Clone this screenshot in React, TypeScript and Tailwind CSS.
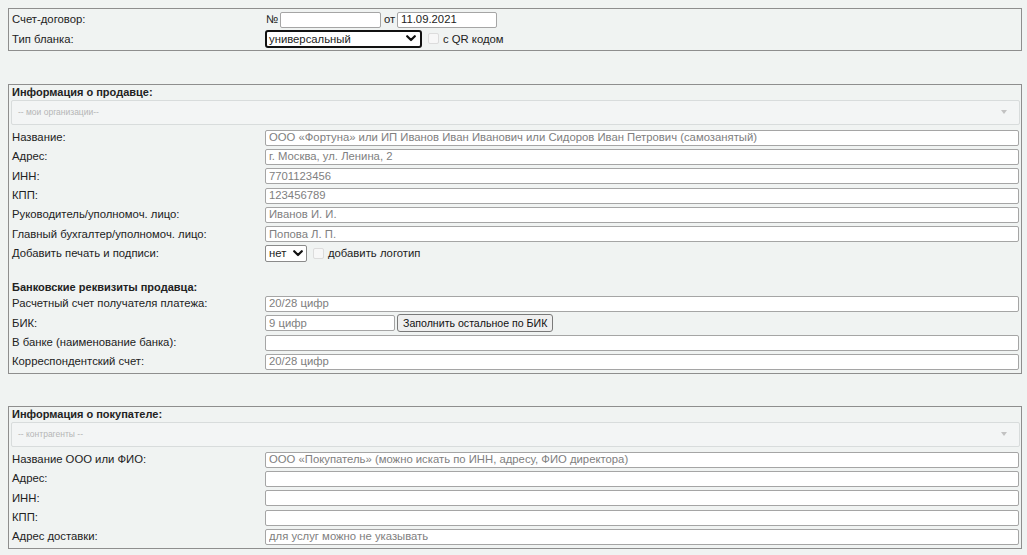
import React from 'react';

const Chevron = () => (
  <svg width="10" height="7" viewBox="0 0 10 7" className="shrink-0">
    <path d="M1.2 1.2 L5 5 L8.8 1.2" fill="none" stroke="#111" strokeWidth="2.2" strokeLinecap="round" strokeLinejoin="round" />
  </svg>
);

const TextInput = ({ placeholder, value, className = 'w-full' }: { placeholder?: string; value?: string; className?: string }) => (
  <input
    readOnly
    placeholder={placeholder}
    defaultValue={value}
    className={`h-[16px] ${className} border border-[#a5a5a5] rounded-[2px] bg-white px-[3px] text-[11.3px] text-[#222] placeholder:text-[#808080] outline-none`}
  />
);

const FakeCheckbox = () => (
  <span className="inline-block w-[11px] h-[11px] border border-[#dcdcdc] rounded-[2px] bg-[#f7f7f7]" />
);

const Row = ({ label, children }: { label: string; children: React.ReactNode }) => (
  <div className="grid grid-cols-[253px_1fr] h-[19.33px] items-center">
    <div className="whitespace-nowrap">{label}</div>
    <div className="flex items-center">{children}</div>
  </div>
);

const OrgSelect = ({ text }: { text: string }) => (
  <div className="-mx-px h-[25px] flex items-center justify-between border border-[#d8dcdc] rounded-[2px] bg-[#f3f5f5] pl-[6px] pr-[12px]">
    <span className="text-[8.5px] text-[#b5b5b5]">{text}</span>
    <svg width="6" height="4" viewBox="0 0 6 4">
      <path d="M0 0 L6 0 L3 4 Z" fill="#c2c2c2" />
    </svg>
  </div>
);

const Box = ({ children, className = '' }: { children: React.ReactNode; className?: string }) => (
  <div className={`border border-[#8e8e8e] pl-[3px] pr-[2px] ${className}`}>{children}</div>
);

export default function App() {
  return (
    <div className="min-h-[555px] bg-[#f0f3f2] pt-[8px] pl-[8px] pr-[5px] text-[11.3px] text-[#222] font-['Liberation_Sans',Arial,sans-serif]">
      <Box className="py-px">
        <Row label="Счет-договор:">
          <span className="ml-px w-[14px]">№</span>
          <TextInput className="w-[101px]" />
          <span className="ml-[3px] w-[13px]">от</span>
          <TextInput className="w-[100px]" value="11.09.2021" />
        </Row>
        <Row label="Тип бланка:">
          <div className="h-[18px] w-[157px] flex items-center justify-between border-2 border-[#111] rounded-[3px] bg-white pl-[2px] pr-[4px]">
            <span>универсальный</span>
            <Chevron />
          </div>
          <span className="ml-[6px] mr-[4px] flex items-center"><FakeCheckbox /></span>
          <span>с QR кодом</span>
        </Row>
      </Box>

      <Box className="mt-[33px] pb-px">
        <div className="h-[15px] flex items-center font-bold text-[11px]">Информация о продавце:</div>
        <OrgSelect text="-- мои организации--" />
        <div className="h-[3.3px]" />
        <Row label="Название:">
          <TextInput placeholder="ООО «Фортуна» или ИП Иванов Иван Иванович или Сидоров Иван Петрович (самозанятый)" />
        </Row>
        <Row label="Адрес:">
          <TextInput placeholder="г. Москва, ул. Ленина, 2" />
        </Row>
        <Row label="ИНН:">
          <TextInput placeholder="7701123456" />
        </Row>
        <Row label="КПП:">
          <TextInput placeholder="123456789" />
        </Row>
        <Row label="Руководитель/уполномоч. лицо:">
          <TextInput placeholder="Иванов И. И." />
        </Row>
        <Row label="Главный бухгалтер/уполномоч. лицо:">
          <TextInput placeholder="Попова Л. П." />
        </Row>
        <Row label="Добавить печать и подписи:">
          <div className="h-[17px] w-[42px] flex items-center justify-between border border-[#8a8a8a] rounded-[2px] bg-white pl-[3px] pr-[3px]">
            <span>нет</span>
            <Chevron />
          </div>
          <span className="ml-[6px] mr-[4px] flex items-center"><FakeCheckbox /></span>
          <span>добавить логотип</span>
        </Row>
        <div className="h-[16px]" />
        <div className="h-[15px] flex items-center font-bold text-[11px]">Банковские реквизиты продавца:</div>
        <Row label="Расчетный счет получателя платежа:">
          <TextInput placeholder="20/28 цифр" />
        </Row>
        <Row label="БИК:">
          <TextInput className="w-[130px]" placeholder="9 цифр" />
          <button className="ml-[2px] h-[18px] px-[5px] border border-[#7a7a7a] rounded-[3px] bg-[#efefef] text-[10.6px] text-[#111] leading-none whitespace-nowrap">
            Заполнить остальное по БИК
          </button>
        </Row>
        <Row label="В банке (наименование банка):">
          <TextInput />
        </Row>
        <Row label="Корреспондентский счет:">
          <TextInput placeholder="20/28 цифр" />
        </Row>
      </Box>

      <Box className="mt-[32px] pb-px">
        <div className="h-[15px] flex items-center font-bold text-[11px]">Информация о покупателе:</div>
        <OrgSelect text="-- контрагенты --" />
        <div className="h-[3.3px]" />
        <Row label="Название ООО или ФИО:">
          <TextInput placeholder="ООО «Покупатель» (можно искать по ИНН, адресу, ФИО директора)" />
        </Row>
        <Row label="Адрес:">
          <TextInput />
        </Row>
        <Row label="ИНН:">
          <TextInput />
        </Row>
        <Row label="КПП:">
          <TextInput />
        </Row>
        <Row label="Адрес доставки:">
          <TextInput placeholder="для услуг можно не указывать" />
        </Row>
      </Box>
    </div>
  );
}
